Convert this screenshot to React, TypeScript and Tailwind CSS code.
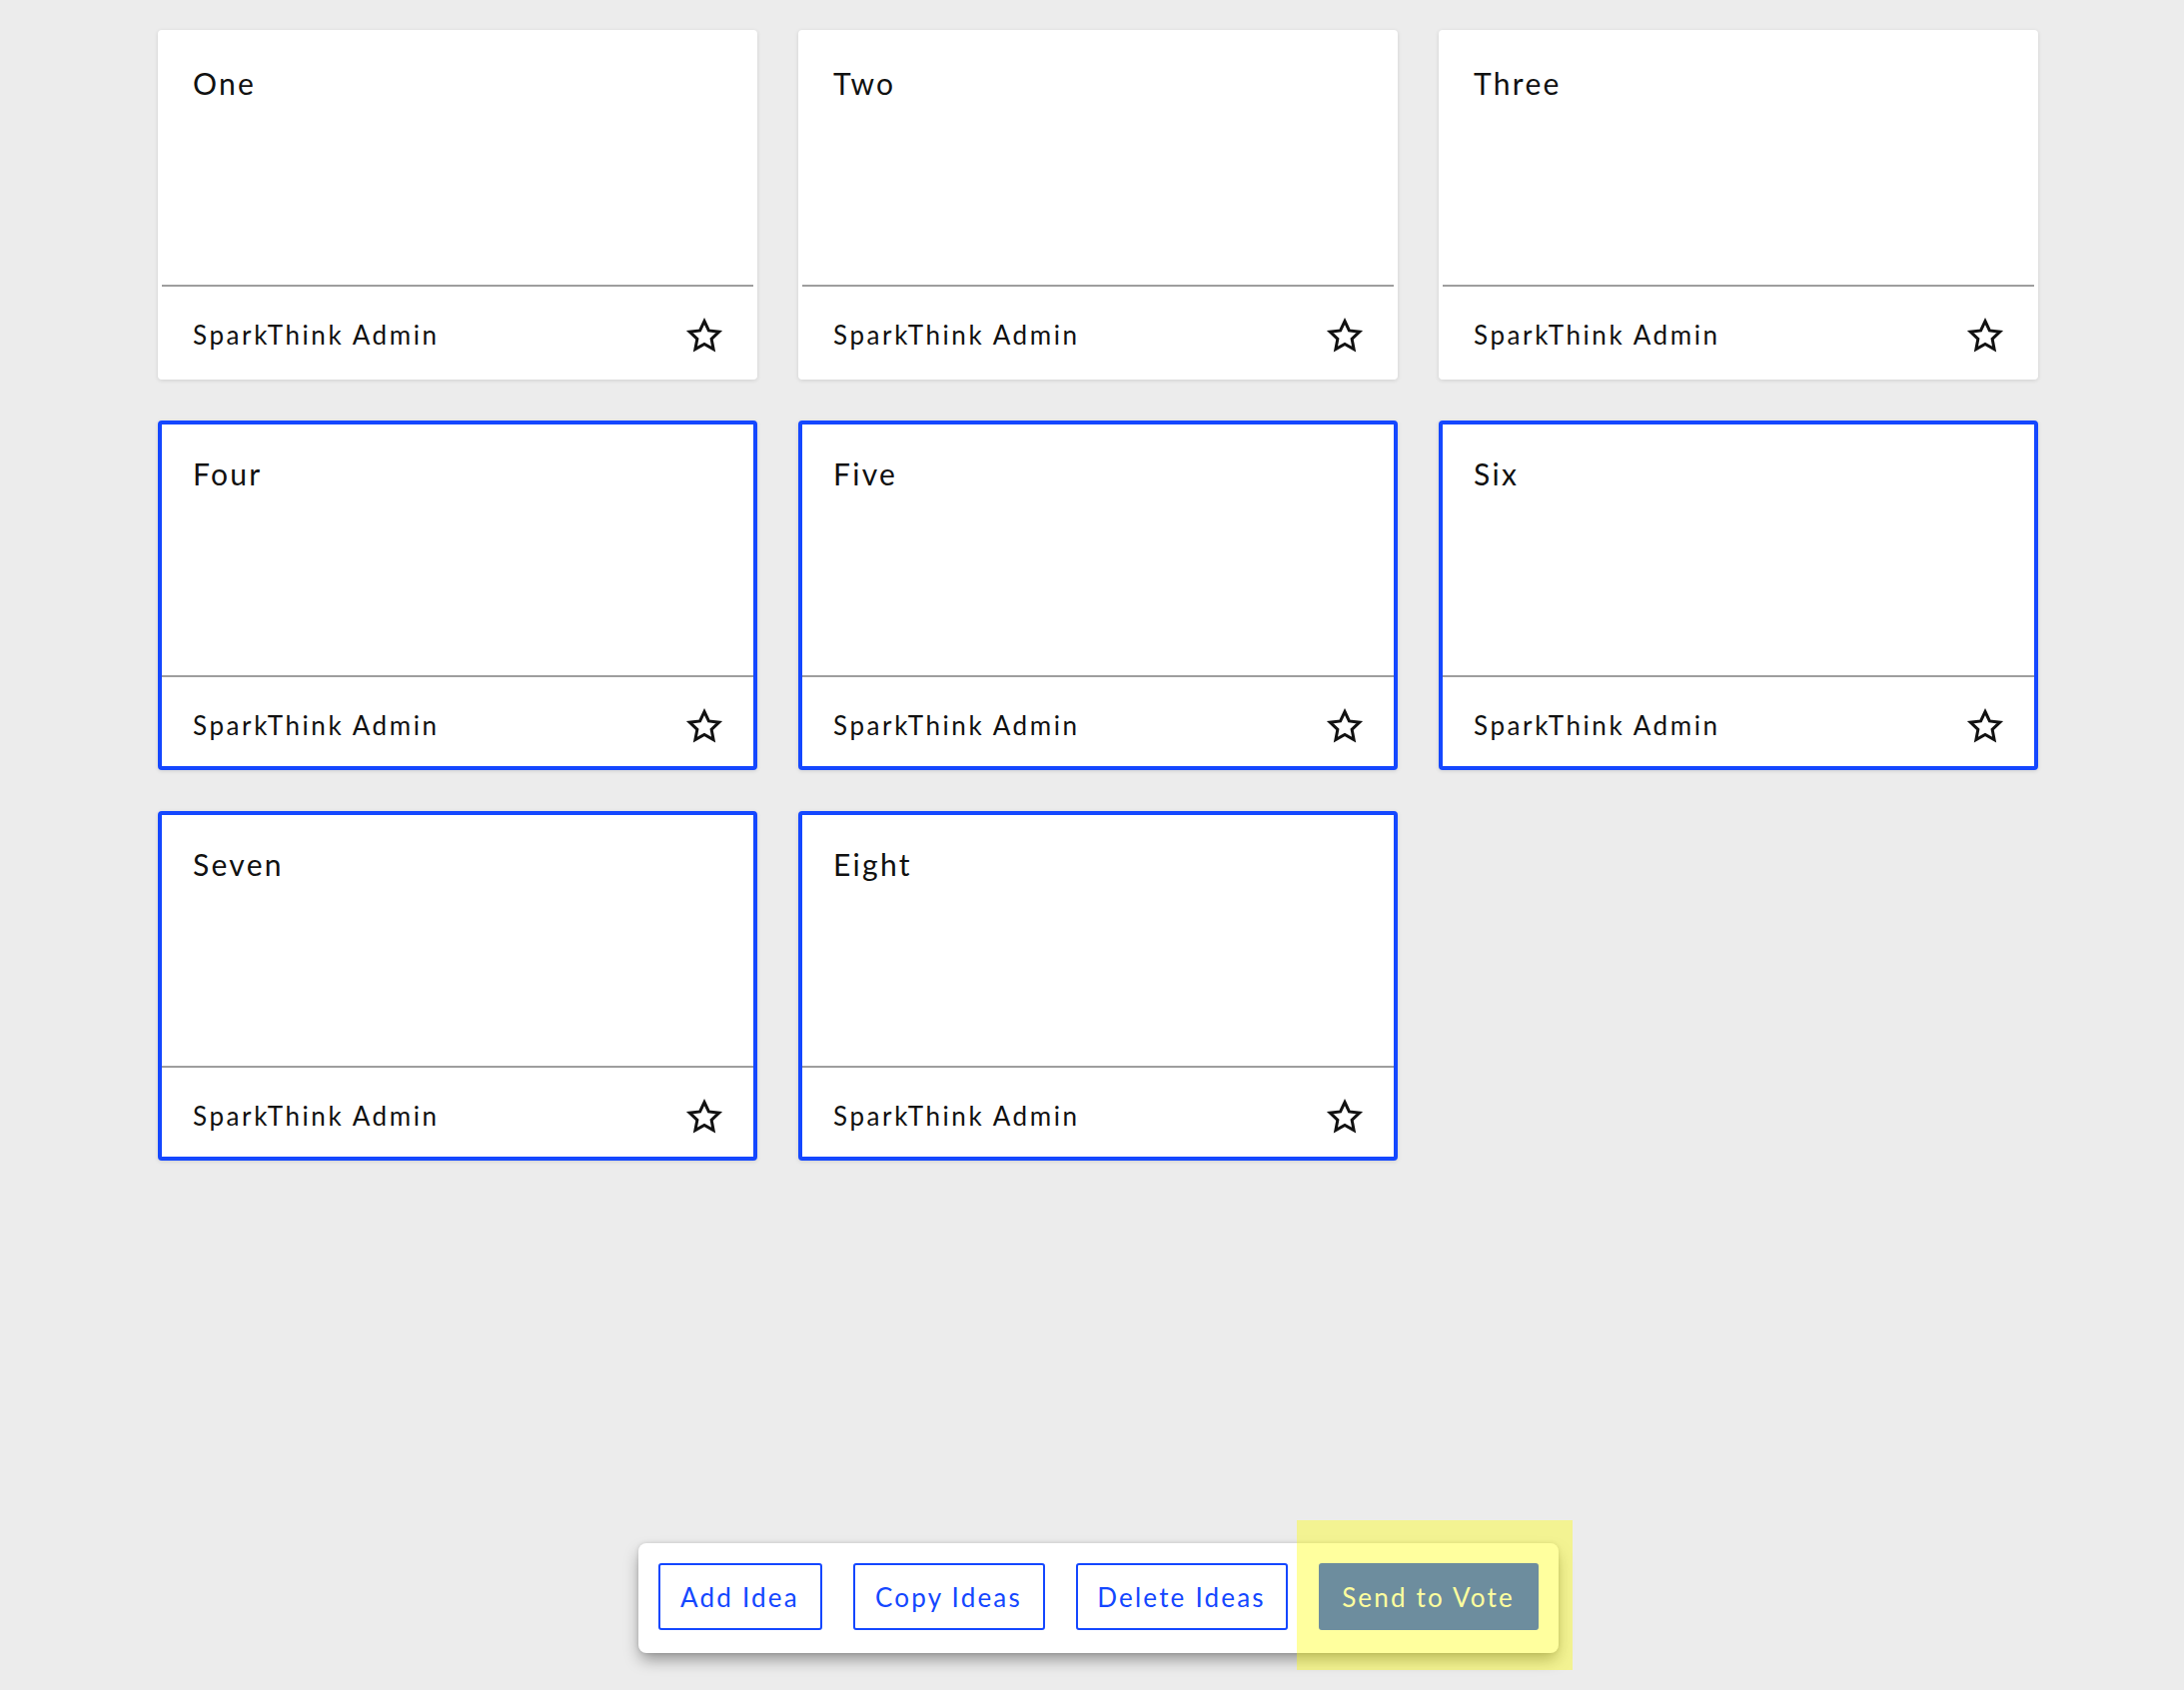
import React from "react";

const cards = [
  { title: "One", selected: false },
  { title: "Two", selected: false },
  { title: "Three", selected: false },
  { title: "Four", selected: true },
  { title: "Five", selected: true },
  { title: "Six", selected: true },
  { title: "Seven", selected: true },
  { title: "Eight", selected: true },
];

function StarIcon() {
  return (
    <svg width="40" height="38" viewBox="0 0 40 38" fill="none">
      <polygon
        points="20,5.5 24.41,14.93 34.74,16.21 27.13,23.32 29.11,33.54 20,28.5 10.89,33.54 12.87,23.32 5.26,16.21 15.59,14.93"
        stroke="#111"
        strokeWidth="3"
        strokeLinejoin="miter"
        fill="none"
      />
    </svg>
  );
}

function Card({ title, selected }: { title: string; selected: boolean }) {
  return (
    <div
      className={
        selected
          ? "flex h-[350px] w-[600px] flex-col rounded-[4px] border-4 border-[#1447ff] bg-white shadow-[0_1px_4px_rgba(0,0,0,0.12)]"
          : "flex h-[350px] w-[600px] flex-col rounded-[4px] border-4 border-white bg-white shadow-[0_1px_4px_rgba(0,0,0,0.12)]"
      }
    >
      <div className="h-[251px] pl-[31px] pt-[34px] text-[30px] leading-none tracking-[2.3px] text-[#111]">
        {title}
      </div>
      <div className="h-[2px] bg-[#9e9e9e]" />
      <div className="flex h-[89px] items-center justify-between pl-[31px] pr-[29px] pt-[6px]">
        <span className="text-[26px] leading-none tracking-[2.6px] text-[#111]">SparkThink Admin</span>
        <StarIcon />
      </div>
    </div>
  );
}

export default function App() {
  return (
    <div
      className="flex min-h-screen flex-col bg-[#ececec] pl-[158px] pt-[30px]"
      style={{ fontFamily: "Lato, 'Liberation Sans', sans-serif" }}
    >
      <div className="grid w-[1882px] grid-cols-[600px_600px_600px] gap-x-[41px] gap-y-[41px]">
        {cards.map((c) => (
          <Card key={c.title} title={c.title} selected={c.selected} />
        ))}
      </div>
      <div className="flex-1" />
      <div className="flex w-[1882px] justify-center pb-[37px]">
        <div className="relative flex h-[110px] w-[921px] items-start gap-[31px] rounded-[8px] bg-white px-[20px] pt-[20px] shadow-[0_8px_16px_-2px_rgba(0,0,0,0.4),0_0_4px_rgba(0,0,0,0.12)]">
          <button className="flex h-[67px] w-[164px] items-center justify-center rounded-[3px] border-2 border-[#1447ff] text-[26px] leading-none tracking-[2.2px] text-[#1447ff]">
            Add Idea
          </button>
          <button className="flex h-[67px] w-[192px] items-center justify-center rounded-[3px] border-2 border-[#1447ff] text-[26px] leading-none tracking-[2.2px] text-[#1447ff]">
            Copy Ideas
          </button>
          <button className="flex h-[67px] w-[212px] items-center justify-center rounded-[3px] border-2 border-[#1447ff] text-[26px] leading-none tracking-[2.2px] text-[#1447ff]">
            Delete Ideas
          </button>
          <button className="flex h-[67px] w-[220px] items-center justify-center rounded-[3px] border-2 border-[#1447ff] bg-[#1447ff] text-[26px] leading-none tracking-[2.2px] text-white">
            Send to Vote
          </button>
          <div className="pointer-events-none absolute left-[659px] top-[-23px] h-[150px] w-[276px] bg-[rgba(255,255,0,0.38)]" />
        </div>
      </div>
    </div>
  );
}
